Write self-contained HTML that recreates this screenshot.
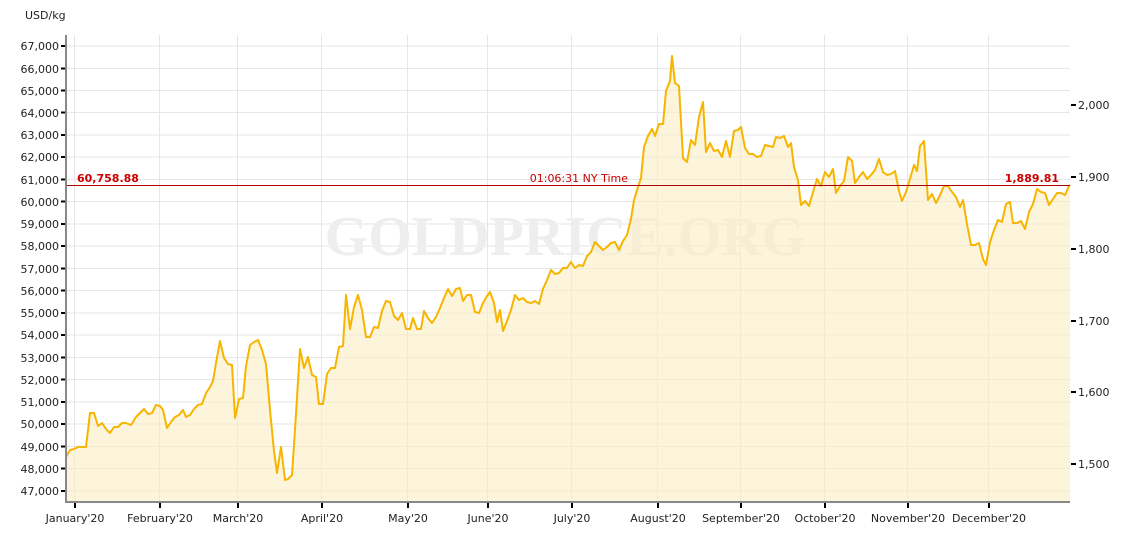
<!DOCTYPE html>
<html><head><meta charset="utf-8"><style>html,body{margin:0;padding:0;background:#fff}svg{display:block}</style></head><body>
<svg width="1130" height="538" xmlns="http://www.w3.org/2000/svg" font-family="'DejaVu Sans','Liberation Sans',sans-serif">
<g stroke="#e6e6e6" stroke-width="1">
<line x1="66" x2="1070" y1="46" y2="46"/><line x1="66" x2="1070" y1="68.5" y2="68.5"/><line x1="66" x2="1070" y1="90.5" y2="90.5"/><line x1="66" x2="1070" y1="112.5" y2="112.5"/><line x1="66" x2="1070" y1="135" y2="135"/><line x1="66" x2="1070" y1="157" y2="157"/><line x1="66" x2="1070" y1="179.5" y2="179.5"/><line x1="66" x2="1070" y1="201.5" y2="201.5"/><line x1="66" x2="1070" y1="224" y2="224"/><line x1="66" x2="1070" y1="246" y2="246"/><line x1="66" x2="1070" y1="268.5" y2="268.5"/><line x1="66" x2="1070" y1="290.5" y2="290.5"/><line x1="66" x2="1070" y1="313" y2="313"/><line x1="66" x2="1070" y1="335" y2="335"/><line x1="66" x2="1070" y1="357.5" y2="357.5"/><line x1="66" x2="1070" y1="379.5" y2="379.5"/><line x1="66" x2="1070" y1="402" y2="402"/><line x1="66" x2="1070" y1="424" y2="424"/><line x1="66" x2="1070" y1="446.5" y2="446.5"/><line x1="66" x2="1070" y1="468.5" y2="468.5"/><line x1="66" x2="1070" y1="491" y2="491"/>
<line x1="74.5" x2="74.5" y1="35" y2="502"/><line x1="159.5" x2="159.5" y1="35" y2="502"/><line x1="237.5" x2="237.5" y1="35" y2="502"/><line x1="321.5" x2="321.5" y1="35" y2="502"/><line x1="407.5" x2="407.5" y1="35" y2="502"/><line x1="487.5" x2="487.5" y1="35" y2="502"/><line x1="571.5" x2="571.5" y1="35" y2="502"/><line x1="657.5" x2="657.5" y1="35" y2="502"/><line x1="740.5" x2="740.5" y1="35" y2="502"/><line x1="824.5" x2="824.5" y1="35" y2="502"/><line x1="907.5" x2="907.5" y1="35" y2="502"/><line x1="988.5" x2="988.5" y1="35" y2="502"/>
</g>
<text x="565" y="255" text-anchor="middle" font-family="'Liberation Serif',serif" font-weight="bold" font-size="56" fill="#eeeeee">GOLDPRICE.ORG</text>
<polygon fill="#fcedc4" fill-opacity="0.6" points="66,502 66,457 70,450 74,449 78,447 86,447 90,413 94,413 98,426 102,423 106,429 110,433 114,427 118,427 122,423 126,423 131,425 136,417 140,413 144,409 148,414 152,413 156,405 160,406 163,410 167,428 171,422 175,417 179,415 183,410 186,417 190,415 194,409 198,405 202,404 206,393 210,387 213,381 216,363 220,341 224,358 228,364 232,365 235,418 239,399 243,398 246,366 250,345 254,342 258,340 262,350 266,364 270,410 274,451 277,473 281,447 285,480 288,479 292,475 296,414 300,349 304,368 308,357 312,375 316,377 319,404 323,404 327,374 331,368 335,368 339,347 343,346 346,295 350,329 354,307 358,295 362,310 366,337 370,337 374,327 378,328 382,311 386,301 390,302 394,316 398,320 402,313 406,329 410,329 413,318 417,329 421,329 424,311 428,318 432,323 436,317 440,308 444,298 448,289 452,296 456,289 460,288 463,301 467,295 471,295 475,312 479,313 483,303 487,296 490,292 494,303 497,322 500,310 503,331 507,321 511,310 515,295 519,300 523,298 527,302 531,303 535,301 539,304 543,289 547,280 551,270 555,274 559,273 563,268 567,268 571,262 575,268 579,265 583,266 587,256 591,252 595,242 599,246 603,250 607,247 611,243 615,242 619,250 623,241 627,235 631,219 634,200 638,187 641,178 644,147 648,136 652,129 655,136 659,124 663,124 666,91 670,81 672,56 675,83 679,86 683,158 687,162 691,140 695,145 699,117 703,102 706,152 710,143 714,151 718,150 722,157 726,141 730,157 734,131 738,130 741,127 745,148 749,154 753,154 757,157 761,156 765,145 769,146 773,147 776,137 780,138 784,136 788,147 791,143 794,167 798,180 801,205 805,201 809,206 813,192 817,179 821,186 825,172 829,177 833,169 836,193 840,186 844,181 848,157 852,161 855,183 859,177 863,172 867,179 871,175 875,170 879,159 883,172 887,175 891,174 895,171 899,191 902,201 906,192 910,179 914,165 917,171 920,146 924,141 928,200 932,194 936,203 940,195 944,186 948,186 952,192 956,197 960,207 963,200 967,224 971,245 975,245 979,243 983,259 986,265 990,242 994,230 998,220 1002,222 1006,204 1010,202 1013,223 1017,223 1021,221 1025,229 1029,212 1033,204 1037,189 1041,192 1045,193 1049,205 1053,199 1057,193 1061,193 1065,195 1069,186 1070,185 1070,502"/>
<polyline fill="none" stroke="#f7b500" stroke-width="2" stroke-linejoin="round" points="66,457 70,450 74,449 78,447 86,447 90,413 94,413 98,426 102,423 106,429 110,433 114,427 118,427 122,423 126,423 131,425 136,417 140,413 144,409 148,414 152,413 156,405 160,406 163,410 167,428 171,422 175,417 179,415 183,410 186,417 190,415 194,409 198,405 202,404 206,393 210,387 213,381 216,363 220,341 224,358 228,364 232,365 235,418 239,399 243,398 246,366 250,345 254,342 258,340 262,350 266,364 270,410 274,451 277,473 281,447 285,480 288,479 292,475 296,414 300,349 304,368 308,357 312,375 316,377 319,404 323,404 327,374 331,368 335,368 339,347 343,346 346,295 350,329 354,307 358,295 362,310 366,337 370,337 374,327 378,328 382,311 386,301 390,302 394,316 398,320 402,313 406,329 410,329 413,318 417,329 421,329 424,311 428,318 432,323 436,317 440,308 444,298 448,289 452,296 456,289 460,288 463,301 467,295 471,295 475,312 479,313 483,303 487,296 490,292 494,303 497,322 500,310 503,331 507,321 511,310 515,295 519,300 523,298 527,302 531,303 535,301 539,304 543,289 547,280 551,270 555,274 559,273 563,268 567,268 571,262 575,268 579,265 583,266 587,256 591,252 595,242 599,246 603,250 607,247 611,243 615,242 619,250 623,241 627,235 631,219 634,200 638,187 641,178 644,147 648,136 652,129 655,136 659,124 663,124 666,91 670,81 672,56 675,83 679,86 683,158 687,162 691,140 695,145 699,117 703,102 706,152 710,143 714,151 718,150 722,157 726,141 730,157 734,131 738,130 741,127 745,148 749,154 753,154 757,157 761,156 765,145 769,146 773,147 776,137 780,138 784,136 788,147 791,143 794,167 798,180 801,205 805,201 809,206 813,192 817,179 821,186 825,172 829,177 833,169 836,193 840,186 844,181 848,157 852,161 855,183 859,177 863,172 867,179 871,175 875,170 879,159 883,172 887,175 891,174 895,171 899,191 902,201 906,192 910,179 914,165 917,171 920,146 924,141 928,200 932,194 936,203 940,195 944,186 948,186 952,192 956,197 960,207 963,200 967,224 971,245 975,245 979,243 983,259 986,265 990,242 994,230 998,220 1002,222 1006,204 1010,202 1013,223 1017,223 1021,221 1025,229 1029,212 1033,204 1037,189 1041,192 1045,193 1049,205 1053,199 1057,193 1061,193 1065,195 1069,186 1070,185"/>
<line x1="66" x2="1070" y1="185.5" y2="185.5" stroke="#b00000" stroke-width="1"/>
<g font-size="11" font-weight="bold" fill="#cc0000">
<text x="77" y="182">60,758.88</text>
<text x="1059" y="182" text-anchor="end">1,889.81</text>
</g>
<text x="628" y="182" font-size="11" fill="#cc0000" text-anchor="end">01:06:31 NY Time</text>
<line x1="66" x2="66" y1="35" y2="503" stroke="#888" stroke-width="2"/>
<line x1="65" x2="1070" y1="502" y2="502" stroke="#888" stroke-width="2"/>
<g stroke="#000" stroke-width="2">
<line x1="61" x2="65" y1="46" y2="46"/><line x1="61" x2="65" y1="68.5" y2="68.5"/><line x1="61" x2="65" y1="90.5" y2="90.5"/><line x1="61" x2="65" y1="112.5" y2="112.5"/><line x1="61" x2="65" y1="135" y2="135"/><line x1="61" x2="65" y1="157" y2="157"/><line x1="61" x2="65" y1="179.5" y2="179.5"/><line x1="61" x2="65" y1="201.5" y2="201.5"/><line x1="61" x2="65" y1="224" y2="224"/><line x1="61" x2="65" y1="246" y2="246"/><line x1="61" x2="65" y1="268.5" y2="268.5"/><line x1="61" x2="65" y1="290.5" y2="290.5"/><line x1="61" x2="65" y1="313" y2="313"/><line x1="61" x2="65" y1="335" y2="335"/><line x1="61" x2="65" y1="357.5" y2="357.5"/><line x1="61" x2="65" y1="379.5" y2="379.5"/><line x1="61" x2="65" y1="402" y2="402"/><line x1="61" x2="65" y1="424" y2="424"/><line x1="61" x2="65" y1="446.5" y2="446.5"/><line x1="61" x2="65" y1="468.5" y2="468.5"/><line x1="61" x2="65" y1="491" y2="491"/>
<line x1="1071" x2="1076" y1="105" y2="105"/><line x1="1071" x2="1076" y1="177" y2="177"/><line x1="1071" x2="1076" y1="249" y2="249"/><line x1="1071" x2="1076" y1="321" y2="321"/><line x1="1071" x2="1076" y1="392" y2="392"/><line x1="1071" x2="1076" y1="464" y2="464"/>
<line x1="75" x2="75" y1="503" y2="508"/><line x1="160" x2="160" y1="503" y2="508"/><line x1="238" x2="238" y1="503" y2="508"/><line x1="322" x2="322" y1="503" y2="508"/><line x1="408" x2="408" y1="503" y2="508"/><line x1="488" x2="488" y1="503" y2="508"/><line x1="572" x2="572" y1="503" y2="508"/><line x1="658" x2="658" y1="503" y2="508"/><line x1="741" x2="741" y1="503" y2="508"/><line x1="825" x2="825" y1="503" y2="508"/><line x1="908" x2="908" y1="503" y2="508"/><line x1="989" x2="989" y1="503" y2="508"/>
</g>
<g font-size="11" fill="#222">
<text x="25" y="19">USD/kg</text>
<g text-anchor="end">
<text x="59" y="50">67,000</text><text x="59" y="73">66,000</text><text x="59" y="95">65,000</text><text x="59" y="117">64,000</text><text x="59" y="139">63,000</text><text x="59" y="161">62,000</text><text x="59" y="184">61,000</text><text x="59" y="206">60,000</text><text x="59" y="228">59,000</text><text x="59" y="250">58,000</text><text x="59" y="273">57,000</text><text x="59" y="295">56,000</text><text x="59" y="317">55,000</text><text x="59" y="339">54,000</text><text x="59" y="362">53,000</text><text x="59" y="384">52,000</text><text x="59" y="406">51,000</text><text x="59" y="428">50,000</text><text x="59" y="451">49,000</text><text x="59" y="473">48,000</text><text x="59" y="495">47,000</text>
</g>
<text x="1078" y="109">2,000</text><text x="1078" y="181">1,900</text><text x="1078" y="253">1,800</text><text x="1078" y="325">1,700</text><text x="1078" y="396">1,600</text><text x="1078" y="468">1,500</text>
<g text-anchor="middle">
<text x="75" y="522">January'20</text><text x="160" y="522">February'20</text><text x="238" y="522">March'20</text><text x="322" y="522">April'20</text><text x="408" y="522">May'20</text><text x="488" y="522">June'20</text><text x="572" y="522">July'20</text><text x="658" y="522">August'20</text><text x="741" y="522">September'20</text><text x="825" y="522">October'20</text><text x="908" y="522">November'20</text><text x="989" y="522">December'20</text>
</g>
</g>
</svg>
</body></html>
